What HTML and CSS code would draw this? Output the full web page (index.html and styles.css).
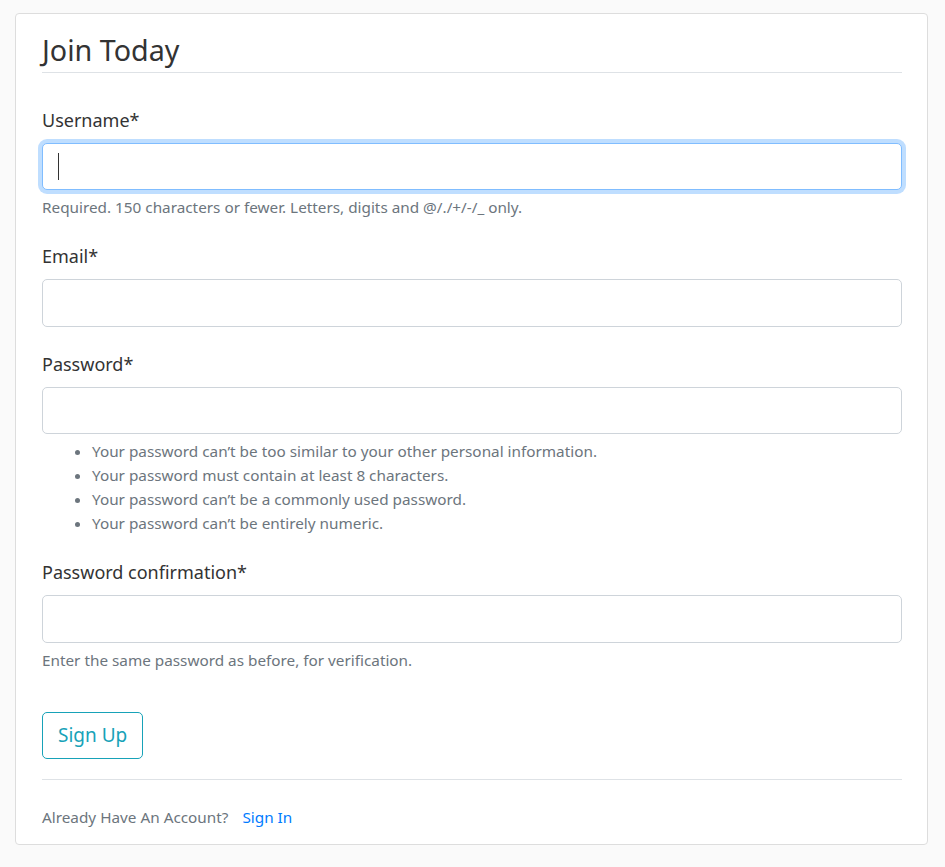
FILE: index.html
```html
<!DOCTYPE html>
<html lang="en">
<head>
<meta charset="utf-8">
<title>Join Today</title>
<link rel="stylesheet" href="styles.css">
</head>
<body>
<main class="page">
  <div class="content-section">
    <form class="form">
      <fieldset class="fieldset">
        <legend class="legend">Join Today</legend>

        <div class="form-group">
          <label class="label">Username*</label>
          <div class="input-wrap">
            <input class="input input-focus" type="text">
            <span class="caret"></span>
          </div>
          <small class="form-text">Required. 150 characters or fewer. Letters, digits and @/./+/-/_ only.</small>
        </div>

        <div class="form-group">
          <label class="label">Email*</label>
          <input class="input" type="email">
        </div>

        <div class="form-group">
          <label class="label">Password*</label>
          <input class="input" type="password">
          <small class="form-text">
            <ul class="help-list">
              <li>Your password can’t be too similar to your other personal information.</li>
              <li>Your password must contain at least 8 characters.</li>
              <li>Your password can’t be a commonly used password.</li>
              <li>Your password can’t be entirely numeric.</li>
            </ul>
          </small>
        </div>

        <div class="form-group">
          <label class="label">Password confirmation*</label>
          <input class="input" type="password">
          <small class="form-text">Enter the same password as before, for verification.</small>
        </div>
      </fieldset>

      <div class="form-group">
        <button class="btn-outline-info" type="button">Sign Up</button>
      </div>
    </form>
    <div class="footer">
      <small class="muted">Already Have An Account? <a class="link" href="#">Sign In</a></small>
    </div>
  </div>
</main>
</body>
</html>
```
FILE: styles.css
```css
* { box-sizing: border-box; }

html, body { margin: 0; padding: 0; }

body {
  background: #fafafa;
  color: #333333;
  font-family: "Noto Sans", "Open Sans", sans-serif;
  font-size: 19px;
  line-height: 1.5;
}

.page {
  padding: 13px 17px 0 15px;
}

.content-section {
  background: #ffffff;
  border: 1px solid #dddddd;
  border-radius: 4px;
  padding: 12.5px 25px 14px 26px;
}

.form { margin: 0; }

.fieldset {
  border: 0;
  margin: 0 0 20px;
  padding: 0;
  min-width: 0;
  display: flow-root;
}

.legend {
  display: block;
  width: 100%;
  padding: 0;
  font-size: 28.7px;
  line-height: 45px;
  color: #333333;
  border-bottom: 1px solid #dee2e6;
  margin-bottom: 30px;
}

.form-group {
  margin-bottom: 20px;
}

.label {
  display: inline-block;
  margin-bottom: 8px;
  padding-top: 2px;
  font-size: 18px;
  line-height: 30px;
  color: #333333;
}

.input-wrap {
  position: relative;
}

.input {
  display: block;
  width: 100%;
  height: 47.5px;
  padding: 7.5px 15px;
  font: inherit;
  color: #495057;
  background: #ffffff;
  border: 1px solid #ced4da;
  border-radius: 5px;
  outline: none;
}

.input-focus {
  border-color: #80bdff;
  box-shadow: 0 0 0 4px rgba(0, 123, 255, 0.25);
}

.caret {
  position: absolute;
  left: 16px;
  top: 10px;
  width: 1px;
  height: 27px;
  background: #333;
}

.form-text {
  display: block;
  margin-top: 5px;
  font-size: 15.3px;
  line-height: 24px;
  color: #6c757d;
}

.help-list {
  margin: 0 0 20px;
  padding-left: 50px;
}

.btn-outline-info {
  font: inherit;
  font-size: 19px;
  line-height: 30px;
  padding: 7.5px 15px;
  color: #17a2b8;
  background: transparent;
  border: 1px solid #17a2b8;
  border-radius: 5px;
  cursor: pointer;
}

.footer {
  border-top: 1px solid #dee2e6;
  padding-top: 22px;
}

.muted {
  font-size: 15.3px;
  color: #6c757d;
}

.link {
  color: #007bff;
  text-decoration: none;
  margin-left: 10px;
}
```
